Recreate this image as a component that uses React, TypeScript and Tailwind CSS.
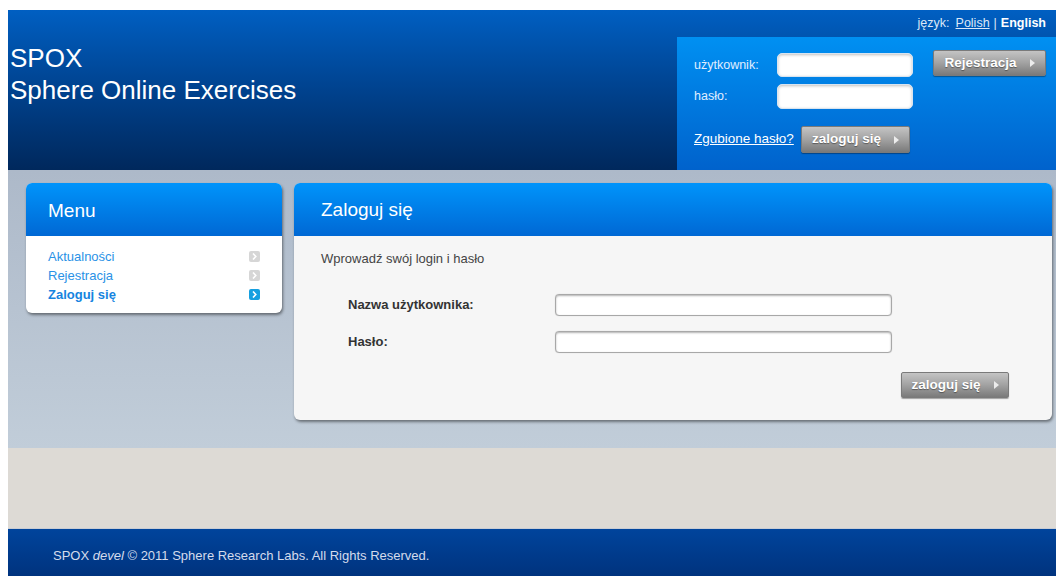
import React from "react";

const font = { fontFamily: '"Liberation Sans", Arial, sans-serif' };

function GrayButton({ label, className = "" }: { label: string; className?: string }) {
  return (
    <button
      type="button"
      className={`flex items-center justify-center gap-[13px] rounded-[2px] border border-[#7a7a7a] bg-gradient-to-b from-[#c4c4c4] via-[#a2a2a2] to-[#7a7a7a] text-[13.5px] font-bold text-white shadow-[0_1px_1px_rgba(0,0,0,0.35)] [text-shadow:0_1px_1px_rgba(0,0,0,0.4)] ${className}`}
    >
      <span>{label}</span>
      <svg width="5" height="8" viewBox="0 0 5 8" className="shrink-0">
        <path d="M0 0 L5 4 L0 8 Z" fill="#ececec" />
      </svg>
    </button>
  );
}

function MenuArrow({ active }: { active?: boolean }) {
  return (
    <span
      className={`flex h-[11px] w-[11px] items-center justify-center rounded-[2px] ${
        active ? "bg-[#16a0e0]" : "bg-[#d6d6d6]"
      }`}
    >
      <svg width="5" height="7" viewBox="0 0 5 7">
        <path d="M1 0.5 L3.8 3.5 L1 6.5" fill="none" stroke="white" strokeWidth="1.6" />
      </svg>
    </span>
  );
}

const menuItems = [
  { label: "Aktualności", active: false },
  { label: "Rejestracja", active: false },
  { label: "Zaloguj się", active: true },
];

export default function App() {
  return (
    <div className="h-[576px] w-[1056px] overflow-hidden bg-white pl-[8px] pt-[10px]" style={font}>
      <div className="flex w-[1048px] flex-col">
        {/* header */}
        <div className="flex h-[160px] flex-col bg-gradient-to-b from-[#005fc2] via-[#00428e] to-[#00285c]">
          <div className="flex h-[27px] items-center justify-end gap-[4px] pr-[10px] text-[12.5px] text-[#dce8f8]">
            <span>język:</span>
            <a className="ml-[2px] underline">Polish</a>
            <span>|</span>
            <span className="font-bold text-white">English</span>
          </div>
          <div className="flex flex-1">
            <div className="flex-1 pl-[2px] pt-[5px] text-[26px] leading-[32px] text-white">
              <div>SPOX</div>
              <div>Sphere Online Exercises</div>
            </div>
            {/* login panel */}
            <div className="w-[379px] bg-gradient-to-b from-[#0090f2] to-[#0062cc] pl-[17px] pt-[16px] text-[12.5px] text-[#e0eeff]">
              <div className="flex items-center">
                <span className="w-[83px]">użytkownik:</span>
                <input className="h-[24px] w-[136px] rounded-[5px] border border-[#d8e4f0] bg-white shadow-[inset_0_1px_3px_rgba(0,0,0,0.25)]" />
                <GrayButton label="Rejestracja" className="ml-[20px] mt-[-4px] h-[26px] w-[113px]" />
              </div>
              <div className="mt-[7px] flex items-center">
                <span className="w-[83px]">hasło:</span>
                <input
                  type="password"
                  className="h-[25px] w-[136px] rounded-[5px] border border-[#d8e4f0] bg-white shadow-[inset_0_1px_3px_rgba(0,0,0,0.25)]"
                />
              </div>
              <div className="mt-[17px] flex items-center">
                <a className="w-[107px] text-[13.5px] text-white underline">Zgubione hasło?</a>
                <GrayButton label="zaloguj się" className="h-[27px] w-[109px]" />
              </div>
            </div>
          </div>
        </div>

        {/* content band */}
        <div className="flex h-[278px] items-start gap-[12px] bg-gradient-to-b from-[#adb9c9] to-[#c1cdd9] pl-[18px] pt-[13px]">
          <div className="w-[256px] rounded-[6px] bg-white shadow-[1px_2px_3px_rgba(0,0,0,0.45)]">
            <div className="flex h-[53px] items-center rounded-t-[6px] bg-gradient-to-b from-[#0094fb] to-[#0068d4] pl-[22px] pt-[3px] text-[19px] text-white">
              Menu
            </div>
            <div className="flex h-[77px] flex-col pl-[22px] pr-[22px] pt-[11px] text-[13px]">
              {menuItems.map((item) => (
                <div key={item.label} className="flex h-[19px] items-center justify-between">
                  <span className={item.active ? "font-bold text-[#1684e0]" : "text-[#2a92e6]"}>{item.label}</span>
                  <MenuArrow active={item.active} />
                </div>
              ))}
            </div>
          </div>

          <div className="w-[758px] rounded-[6px] bg-[#f6f6f6] shadow-[1px_2px_3px_rgba(0,0,0,0.45)]">
            <div className="flex h-[53px] items-center rounded-t-[6px] bg-gradient-to-b from-[#0094fb] to-[#0068d4] pl-[27px] pt-[2px] text-[19px] text-white">
              Zaloguj się
            </div>
            <div className="flex h-[184px] flex-col pl-[27px] pt-[15px] text-[13px] leading-[16px] text-[#444]">
              <div>Wprowadź swój login i hasło</div>
              <div className="mt-[27px] flex items-center">
                <span className="w-[234px] pl-[27px] font-bold text-[#333]">Nazwa użytkownika:</span>
                <input className="h-[22px] w-[337px] rounded-[4px] border border-[#a8a8a8] bg-white shadow-[inset_0_1px_2px_rgba(0,0,0,0.3),0_0_1px_rgba(0,0,0,0.2)]" />
              </div>
              <div className="mt-[15px] flex items-center">
                <span className="w-[234px] pl-[27px] font-bold text-[#333]">Hasło:</span>
                <input
                  type="password"
                  className="h-[22px] w-[337px] rounded-[4px] border border-[#a8a8a8] bg-white shadow-[inset_0_1px_2px_rgba(0,0,0,0.3),0_0_1px_rgba(0,0,0,0.2)]"
                />
              </div>
              <div className="mt-[19px] flex pl-[580px]">
                <GrayButton label="zaloguj się" className="h-[26px] w-[108px]" />
              </div>
            </div>
          </div>
        </div>

        {/* spacer band */}
        <div className="h-[80px] bg-[#dddad5]" />

        {/* footer */}
        <div className="flex h-[48px] items-center border-t border-[#c8ccd4] bg-gradient-to-b from-[#00449c] to-[#00337e] pl-[45px] pt-[6px] text-[13px] text-[#d4dcec]">
          <span>
            SPOX <i>devel</i> © 2011 Sphere Research Labs. All Rights Reserved.
          </span>
        </div>
      </div>
    </div>
  );
}
